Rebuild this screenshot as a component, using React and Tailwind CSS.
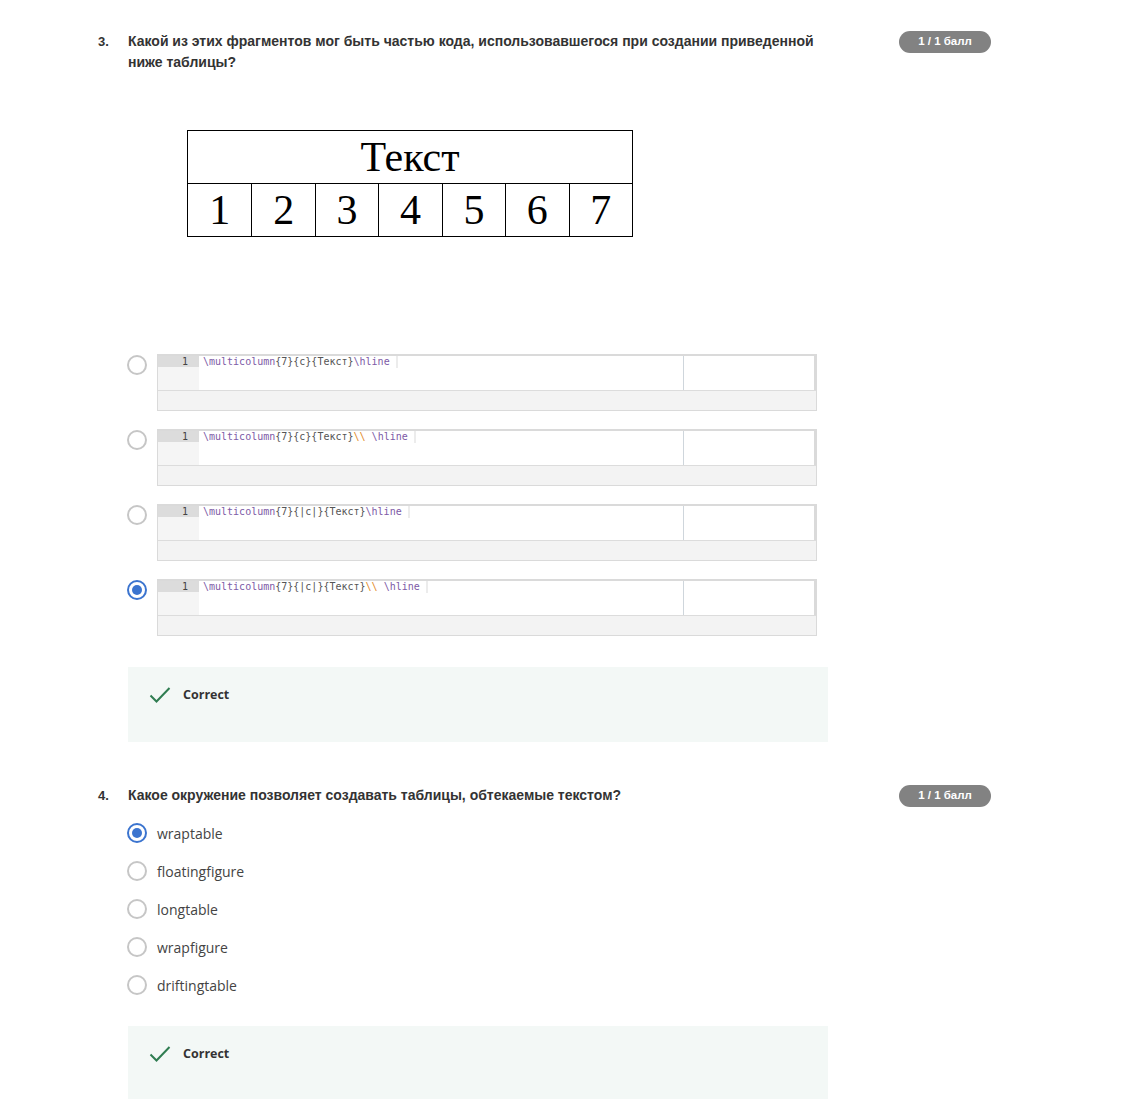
import React from "react";

const HEAD = { fontFamily: "'Liberation Sans', Arial, sans-serif" };
const BODY = { fontFamily: "'Open Sans', 'Noto Sans', sans-serif" };
const MONO = { fontFamily: "'DejaVu Sans Mono', 'Liberation Mono', monospace" };
const SERIF = { fontFamily: "'Liberation Serif', 'DejaVu Serif', serif" };

function Radio({ checked }) {
  return checked ? (
    <span className="w-5 h-5 rounded-full border-2 border-[#3b74cf] flex items-center justify-center shrink-0">
      <span className="w-2.5 h-2.5 rounded-full bg-[#3b74cf]" />
    </span>
  ) : (
    <span className="block w-5 h-5 rounded-full border-2 border-[#c6c6c6] shrink-0" />
  );
}

function Badge() {
  return (
    <span
      className="ml-auto h-[22px] w-[92px] rounded-full bg-[#828282] text-white text-[11.5px] font-bold flex items-center justify-center shrink-0"
      style={HEAD}
    >
      1 / 1 балл
    </span>
  );
}

function Check() {
  return (
    <svg width="22" height="18" viewBox="0 0 22 18" fill="none">
      <path d="M1.5 9.5 L7.5 15.5 L20.5 2" stroke="#2f7d51" strokeWidth="2" />
    </svg>
  );
}

function Correct({ h }) {
  return (
    <div className={`w-[700px] bg-[#f3f8f6] pl-[21px] pt-[19px] ${h}`}>
      <div className="flex items-center gap-3">
        <Check />
        <span className="text-[12.5px] font-bold text-[#333]" style={BODY}>Correct</span>
      </div>
    </div>
  );
}

// one highlighted code token list per option
const CODE = [
  [["p", "\\multicolumn"], ["t", "{7}{c}{Текст}"], ["p", "\\hline"]],
  [["p", "\\multicolumn"], ["t", "{7}{c}{Текст}"], ["o", "\\\\"], ["t", " "], ["p", "\\hline"]],
  [["p", "\\multicolumn"], ["t", "{7}{|c|}{Текст}"], ["p", "\\hline"]],
  [["p", "\\multicolumn"], ["t", "{7}{|c|}{Текст}"], ["o", "\\\\"], ["t", " "], ["p", "\\hline"]],
];

const TOKEN = { p: "text-[#7d5aa6]", t: "text-[#555]", o: "text-[#e38b2c]" };

function CodeBox({ tokens }) {
  return (
    <div className="w-[660px] h-[57px] border border-[#dadada] border-t-2 bg-[#f3f3f3] flex flex-col">
      <div className="h-[35px] flex bg-white border-b border-[#dcdcdc]">
        <div className="w-[41px] bg-[#f5f5f5] shrink-0">
          <div className="h-[11px] bg-[#dcdcdc] text-[10px] leading-[11px] text-[#444] text-right pr-[11px]" style={MONO}>
            1
          </div>
        </div>
        <div className="flex-1 pl-[4px]">
          <div className="flex items-start">
            <span className="text-[10px] leading-[11px] whitespace-pre" style={MONO}>
              {tokens.map(([k, s], i) => (
                <span key={i} className={TOKEN[k]}>{s}</span>
              ))}
            </span>
            <span className="ml-[6px] w-[2px] h-[12px] bg-[#ececec]" />
          </div>
        </div>
        <div className="w-[133px] border-l border-[#cfd6dc] border-r-2 border-r-[#dadada]" />
      </div>
    </div>
  );
}

function LatexTable() {
  return (
    <div className="w-[446px] border border-black text-black" style={SERIF}>
      <div className="h-[53px] border-b border-black flex items-center justify-center text-[42px] leading-none">
        Текст
      </div>
      <div className="h-[52px] grid grid-cols-7">
        {[1, 2, 3, 4, 5, 6, 7].map((n) => (
          <div key={n} className="flex items-center justify-center text-[42px] leading-none border-l border-black first:border-l-0">
            {n}
          </div>
        ))}
      </div>
    </div>
  );
}

const Q4 = ["wraptable", "floatingfigure", "longtable", "wrapfigure", "driftingtable"];

export default function App() {
  return (
    <div className="bg-white min-h-screen pl-[98px] pr-[153px] pt-[31px]">
      {/* question 3 */}
      <div className="flex">
        <span className="w-[30px] text-[13px] font-bold text-[#333] leading-[21px]" style={HEAD}>3.</span>
        <div className="w-[700px]">
          <p className="text-[14px] font-bold text-[#333] leading-[21px]" style={HEAD}>
            Какой из этих фрагментов мог быть частью кода, использовавшегося при создании приведенной ниже таблицы?
          </p>
        </div>
        <Badge />
      </div>

      <div className="pl-[89px] mt-[57px]">
        <LatexTable />
      </div>

      <div className="pl-[29px] mt-[117px] flex flex-col gap-[18px]">
        {CODE.map((tokens, i) => (
          <div key={i} className="flex items-start gap-[10px]">
            <div className="mt-[1px] flex">
              <Radio checked={i === 3} />
            </div>
            <CodeBox tokens={tokens} />
          </div>
        ))}
      </div>

      <div className="pl-[30px] mt-[31px]">
        <Correct h="h-[75px]" />
      </div>

      {/* question 4 */}
      <div className="flex mt-[43px]">
        <span className="w-[30px] text-[13px] font-bold text-[#333] leading-[21px]" style={HEAD}>4.</span>
        <p className="w-[700px] text-[14px] font-bold text-[#333] leading-[21px]" style={HEAD}>
          Какое окружение позволяет создавать таблицы, обтекаемые текстом?
        </p>
        <Badge />
      </div>

      <div className="pl-[29px] mt-[16px] flex flex-col gap-[18px]">
        {Q4.map((t, i) => (
          <div key={t} className="flex items-center gap-[10px] h-5">
            <Radio checked={i === 0} />
            <span className="text-[14px] text-[#444]" style={BODY}>{t}</span>
          </div>
        ))}
      </div>

      <div className="pl-[30px] mt-[31px]">
        <Correct h="h-[80px]" />
      </div>
    </div>
  );
}
